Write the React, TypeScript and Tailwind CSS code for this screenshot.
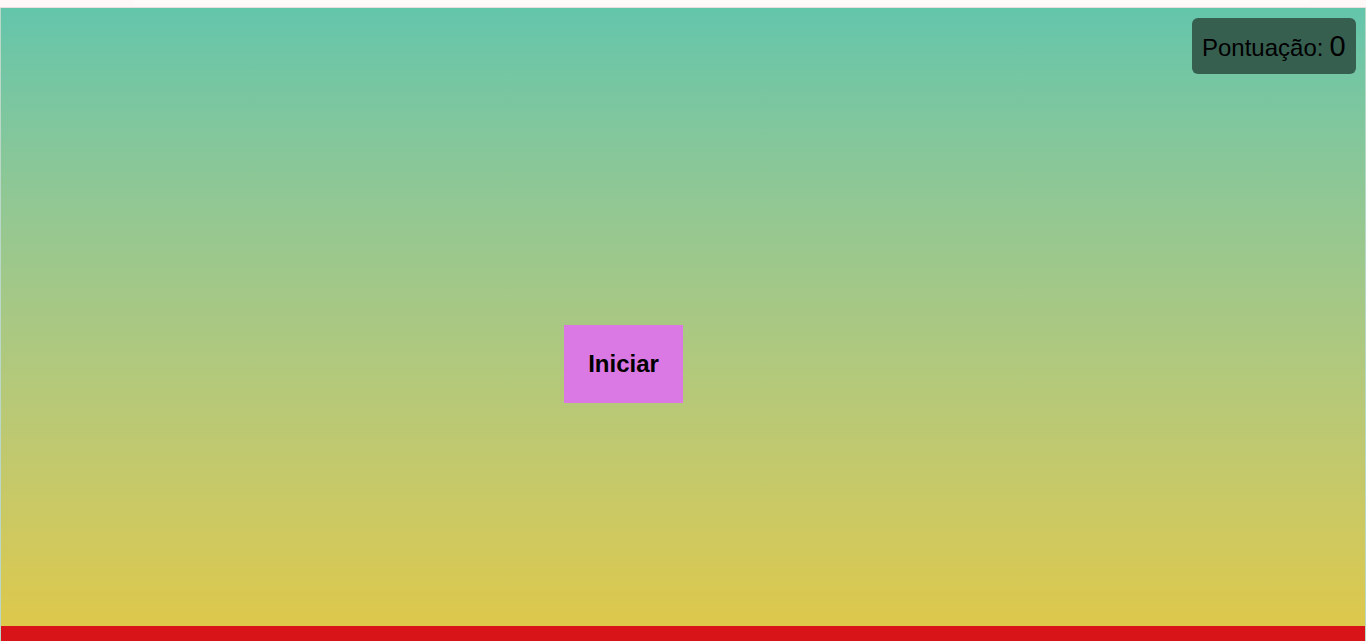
import React from "react";

export default function App() {
  return (
    <div className="flex h-[641px] w-[1366px] flex-col overflow-hidden bg-[#fdf7f7]" style={{ fontFamily: '"Liberation Sans", Arial, sans-serif' }}>
      <div className="relative h-[8px] border-b border-[#eadede] bg-[#fff8f8]">
        <div className="absolute left-[133px] top-0 h-[3px] w-[1177px] rounded-b-[4px] bg-[#fffbfb]" />
      </div>
      <div className="relative flex flex-1 flex-col border-x border-[#b9d8c8] bg-gradient-to-b from-[#63c5ab] to-[#e0c846]">
        <div className="absolute right-[9px] top-[10px] flex h-[56px] w-[164px] items-center rounded-[6px] bg-[#375f50] pl-[10px] text-black">
          <span className="mt-[3px] text-[24px] leading-none">Pontuação:</span>
          <span className="ml-[6px] text-[29px] leading-none">0</span>
        </div>
        <button className="absolute left-[563px] top-[317px] flex h-[78px] w-[119px] items-center justify-center bg-[#da78e4] text-[24px] font-bold text-black">
          Iniciar
        </button>
        <div className="mt-auto h-[15px] bg-[#d91418]" />
      </div>
    </div>
  );
}
